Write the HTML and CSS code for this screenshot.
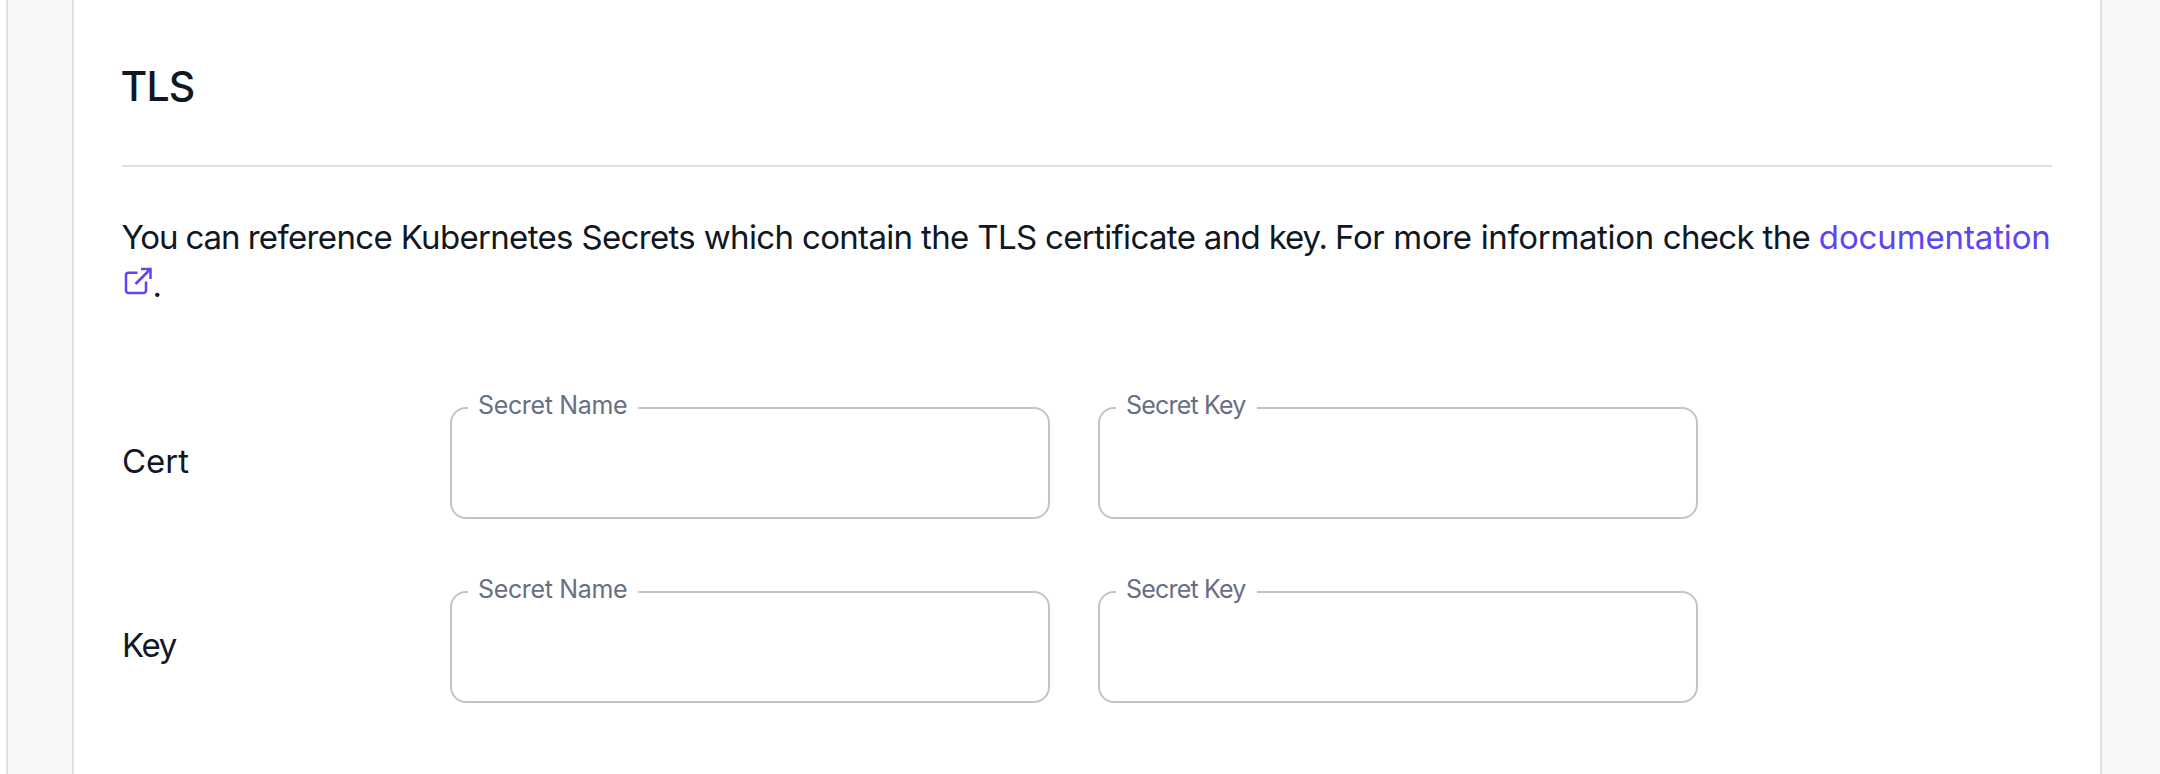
FILE: index.html
```html
<!DOCTYPE html>
<html lang="en">
<head>
<meta charset="utf-8">
<title>TLS</title>
<link rel="stylesheet" href="styles.css">
</head>
<body>
<div class="page">
  <main class="card">
    <h2 class="title"><span>TLS</span></h2>
    <p class="description"><span class="tight">You can </span>reference Kubernetes Secrets which contain the TLS certificate and <span class="tight">key. </span><span class="loose">For more information </span>check the <a class="link" href="#"><span class="link-text">documentation</span> <svg class="icon" viewBox="0 0 28 28" fill="none" stroke="currentColor" stroke-width="2.5"><path d="M13.5 5.8H4.5a2.5 2.5 0 0 0-2.5 2.5V23.500a2.5 2.5 0 0 0 2.5 2.5H19.500a2.500 2.500 0 0 0 2.500-2.500V14.500"/><path d="M17 2h9.500V12M26 2.500L11.500 17"/></svg></a>.</p>
    <div class="row">
      <span class="label label-cert">Cert</span>
      <fieldset class="field"><legend class="legend name"><span>Secret Name</span></legend></fieldset>
      <fieldset class="field"><legend class="legend key"><span>Secret Key</span></legend></fieldset>
    </div>
    <div class="row">
      <span class="label label-key">Key</span>
      <fieldset class="field"><legend class="legend name"><span>Secret Name</span></legend></fieldset>
      <fieldset class="field"><legend class="legend key"><span>Secret Key</span></legend></fieldset>
    </div>
  </main>
</div>
</body>
</html>
```
FILE: styles.css
```css
* { box-sizing: border-box; }
body {
  margin: 0;
  background: #fff;
  color: #111723;
  font-family: Inter, "Liberation Sans", sans-serif;
  overflow: hidden;
}
.page {
  height: 774px;
  margin-left: 6px;
  padding: 0 58px 0 64px;
  border-left: 2px solid #e0e0e0;
  background: #f6f8fa;
}
.card {
  height: 100%;
  padding: 0 48px;
  border: solid #e0e0e0;
  border-width: 0 2px;
  background: #fff;
}
.title {
  height: 167px;
  margin: 0;
  padding-top: 61px;
  border-bottom: 2px solid #e0e0e0;
  font-size: 41px;
  line-height: 50px;
  font-weight: 550;
  letter-spacing: -0.8px;
  text-indent: -1.5px;
}
.description {
  height: 240px;
  margin: 0;
  padding-top: 46px;
  font-size: 33px;
  line-height: 48px;
  letter-spacing: -0.66px;
  text-indent: -0.5px;
}
.tight { letter-spacing: -1.1px; }
.loose { letter-spacing: -0.35px; }
.link { color: #5b45f5; text-decoration: none; }
.link-text { letter-spacing: -0.13px; }
.icon { width: 28px; height: 28px; margin: 0 1px 0 1.5px; vertical-align: 2px; }
.row {
  display: grid;
  grid-template-columns: 280px 600px 600px;
  column-gap: 48px;
  height: 112px;
  margin-bottom: 72px;
}
.label {
  font-size: 33px;
  line-height: 108px;
}
.label-cert { letter-spacing: 0; }
.label-key { letter-spacing: -1.3px; }
.field {
  min-width: 0;
  margin: 0;
  padding: 0 16px;
  border: 2px solid #c4c4c4;
  border-radius: 16px;
}
.legend {
  height: 2px;
  padding: 0 10px;
  color: #686e83;
  font-size: 25px;
  line-height: 0;
  letter-spacing: -0.35px;
  white-space: nowrap;
}
.legend span { position: relative; top: -2px; }
.name { width: 170px; }
.key { width: 141px; letter-spacing: -0.8px; }
```
